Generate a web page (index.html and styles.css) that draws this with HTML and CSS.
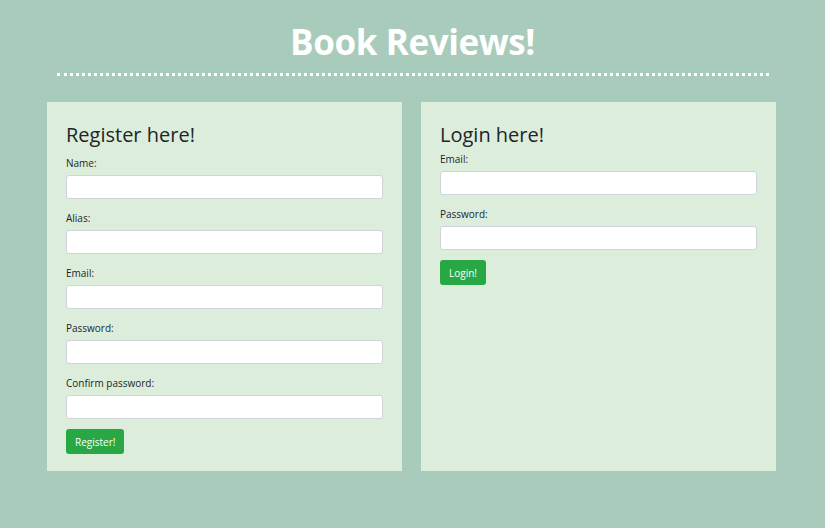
FILE: index.html
```html
<!DOCTYPE html>
<html>
<head>
<meta charset="utf-8">
<link rel="stylesheet" href="styles.css">
</head>
<body>
<header class="header">
  <h1 class="title">Book Reviews!</h1>
  <div class="rule"></div>
</header>
<main class="panels">
  <section class="panel">
    <h2 class="panel-title">Register here!</h2>
    <form class="form">
      <label class="label">Name:</label>
      <input class="input" type="text">
      <label class="label">Alias:</label>
      <input class="input" type="text">
      <label class="label">Email:</label>
      <input class="input" type="text">
      <label class="label">Password:</label>
      <input class="input" type="password">
      <label class="label">Confirm password:</label>
      <input class="input" type="password">
      <button class="btn" type="button">Register!</button>
    </form>
  </section>
  <section class="panel">
    <h2 class="panel-title login">Login here!</h2>
    <form class="form">
      <label class="label">Email:</label>
      <input class="input" type="text">
      <label class="label">Password:</label>
      <input class="input" type="password">
      <button class="btn" type="button">Login!</button>
    </form>
  </section>
</main>
</body>
</html>
```
FILE: styles.css
```css
* { box-sizing: border-box; }
html, body { margin: 0; padding: 0; }
body {
  background: #a9cbbb;
  font-family: "Open Sans", "Noto Sans", sans-serif;
  color: #212529;
  width: 825px;
  height: 528px;
  overflow: hidden;
}
.header {
  display: flex;
  flex-direction: column;
  align-items: center;
  padding-top: 18px;
}
.title {
  margin: 0;
  color: #fff;
  font-size: 35px;
  font-weight: 700;
  line-height: 48px;
  letter-spacing: -0.4px;
}
.rule {
  margin-top: 7px;
  width: 712px;
  border-top: 3px dotted #fff;
}
.panels {
  display: flex;
  gap: 19px;
  padding: 26px 0 0 47px;
}
.panel {
  width: 355px;
  height: 369px;
  background: #ddeddb;
  padding: 19px 19px;
}
.panel-title {
  margin: 0;
  font-size: 20px;
  font-weight: 400;
  line-height: 28px;
  padding-bottom: 7px;
}
.panel-title.login { padding-bottom: 3px; }
.form {
  display: flex;
  flex-direction: column;
  align-items: flex-start;
}
.label {
  font-size: 10px;
  line-height: 14px;
  margin-bottom: 5px;
}
.input {
  width: 317px;
  height: 24px;
  margin: 0 0 12px 0;
  border: 1px solid #ced4da;
  border-radius: 3px;
  background: #fff;
}
.btn {
  background: #28a745;
  color: #fff;
  border: none;
  border-radius: 3px;
  font-family: inherit;
  font-size: 10px;
  height: 25px;
  padding: 0 9px;
  margin-top: -2px;
}
```
